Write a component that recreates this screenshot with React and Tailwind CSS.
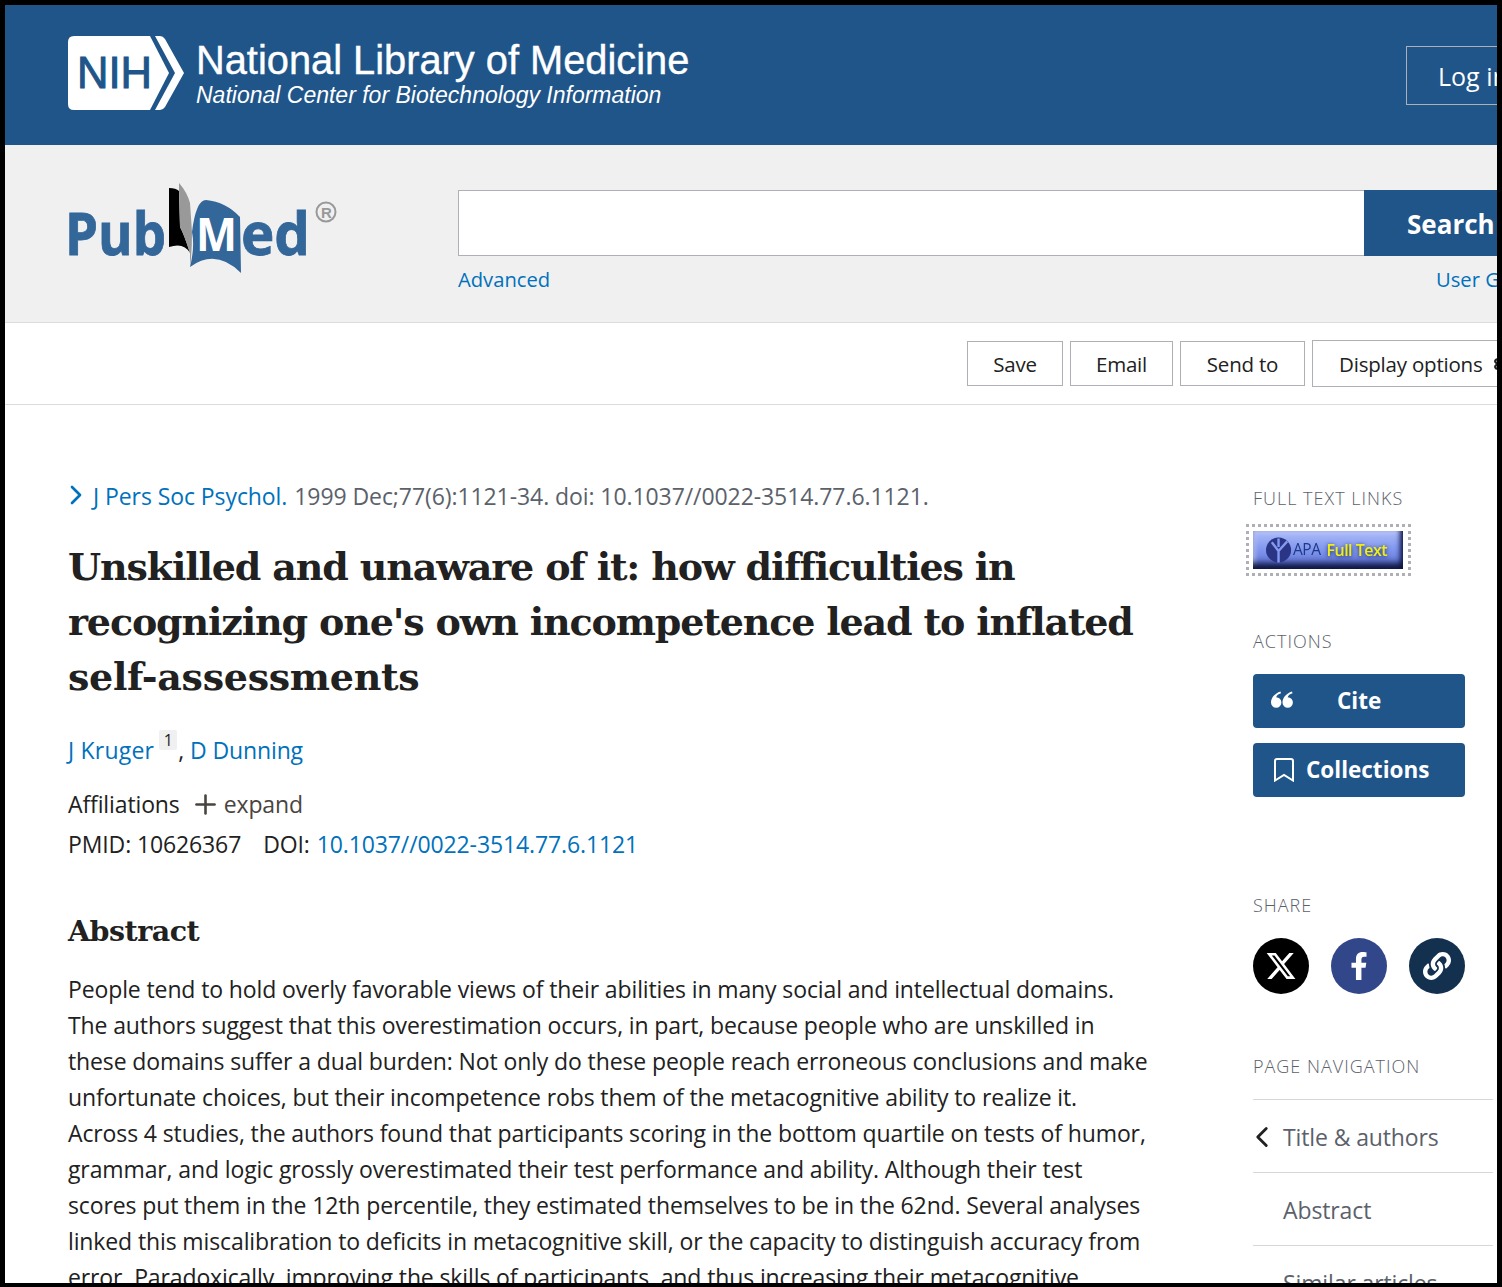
import { ChevronLeft, ChevronRight, Plus, Settings } from 'lucide-react';
import { FaFacebookF, FaLink } from 'react-icons/fa';
import { FaXTwitter } from 'react-icons/fa6';

const sans = 'font-["Open_Sans","Noto_Sans",sans-serif]';
const body = 'text-[23px] tracking-[-0.12px]';

const abstractLines = [
  'People tend to hold overly favorable views of their abilities in many social and intellectual domains.',
  'The authors suggest that this overestimation occurs, in part, because people who are unskilled in',
  'these domains suffer a dual burden: Not only do these people reach erroneous conclusions and make',
  'unfortunate choices, but their incompetence robs them of the metacognitive ability to realize it.',
  'Across 4 studies, the authors found that participants scoring in the bottom quartile on tests of humor,',
  'grammar, and logic grossly overestimated their test performance and ability. Although their test',
  'scores put them in the 12th percentile, they estimated themselves to be in the 62nd. Several analyses',
  'linked this miscalibration to deficits in metacognitive skill, or the capacity to distinguish accuracy from',
  'error. Paradoxically, improving the skills of participants, and thus increasing their metacognitive',
];

const NihLogo = () => (
  <svg width="117" height="74" viewBox="0 0 117 74">
    <path d="M6 0H82L101 37L82 74H6Q0 74 0 68V6Q0 0 6 0Z" fill="#fff" />
    <path d="M87 0H92Q95 0 97 3L116 37L97 71Q95 74 92 74H87L107 37Z" fill="#fff" />
    <text x="9" y="52" fontSize="44" fill="#20558a" stroke="#20558a" strokeWidth="1" fontFamily="Liberation Sans" textLength="75" lengthAdjust="spacingAndGlyphs">NIH</text>
  </svg>
);

const PubMedLogo = () => (
  <svg width="270" height="92" viewBox="0 0 270 92" className="overflow-visible">
    <text x="-3" y="73" fontSize="59" fontWeight="700" fill="#336699" stroke="#336699" strokeWidth="0.8" fontFamily="Open Sans" textLength="101" lengthAdjust="spacingAndGlyphs">Pub</text>
    <path d="M101 6Q108 6 111 9L112 45Q116 52 122 71Q116 60 101 65Z" fill="#000" />
    <path d="M111 1Q119 10 122 21L124 50Q124 70 122 85Q122 75 122 71Q115 50 112 45L111 8Z" fill="#999" />
    <path d="M122 85Q127 65 124 50Q128 18 138 18Q158 20 172 35L173 91Q148 66 122 85Z" fill="#336699" />
    <text x="128" y="69" fontSize="47" fontWeight="700" fill="#fff" fontFamily="Open Sans" textLength="41" lengthAdjust="spacingAndGlyphs">M</text>
    <text x="173" y="73" fontSize="59" fontWeight="700" fill="#336699" stroke="#336699" strokeWidth="0.8" fontFamily="Open Sans" textLength="69" lengthAdjust="spacingAndGlyphs">ed</text>
    <circle cx="258" cy="30" r="9.5" fill="none" stroke="#999" strokeWidth="2" />
    <text x="253" y="36" fontSize="15" fill="#999" fontWeight="700" fontFamily="Liberation Sans">R</text>
  </svg>
);

const ApaBadge = () => (
  <div className="w-[150px] h-[38px] flex items-center pl-[13px] bg-gradient-to-b from-[#aebcf8] via-[#7f95ee] to-[#5a6fd0] shadow-[inset_0_-9px_6px_-3px_#0f1640,inset_-6px_0_5px_-3px_#141c52,inset_4px_3px_4px_-2px_#c2cdfb] overflow-hidden">
    <svg width="27" height="28" viewBox="0 0 28 28" className="blur-[0.5px]">
      <circle cx="13" cy="14" r="13" fill="#2a3585" />
      <path d="M13 27V13M13 15L6 6M13 15L22 5M13 11V2" stroke="#8499f0" strokeWidth="2.5" fill="none" />
    </svg>
    <span className="text-[15.5px] text-[#1f3a85] tracking-[-0.5px] blur-[0.3px]">APA</span>
    <span className="ml-[6px] text-[16px] text-[#f0f010] font-semibold tracking-[-0.5px] [text-shadow:0_1px_4px_#1a2460] whitespace-nowrap blur-[0.3px]">Full Text</span>
  </div>
);

const SideLabel = ({ children, className = '' }) => (
  <h3 className={`text-[18px] leading-[24px] font-light tracking-[1px] text-[#5b616b] ${className}`}>{children}</h3>
);

const ToolButton = ({ children, className = '' }) => (
  <button className={`h-[45px] pt-[1px] border border-[#aeb0b5] text-[20.5px] tracking-[-0.2px] text-[#212121] bg-white shrink-0 ${className}`}>{children}</button>
);

const ShareButton = ({ className, children }) => (
  <div className={`w-[56px] h-[56px] rounded-full flex items-center justify-center text-white ${className}`}>{children}</div>
);

const NavRow = ({ children, active }) => (
  <div className={`h-[73px] border-t border-[#d6d7d9] flex items-center relative pl-[30px] pt-[2px] ${body} text-[#5b616b] whitespace-nowrap`}>
    {active && <ChevronLeft className="absolute left-[-8px] w-[34px] h-[34px] text-[#212121]" strokeWidth={2} />}
    {children}
  </div>
);

export default function App() {
  return (
    <div className={`w-[1502px] h-[1287px] bg-black pt-[5px] pl-[5px] pr-[5px] pb-[4px] ${sans}`}>
      <div className="w-full h-full bg-white overflow-hidden">
        {/* NIH banner */}
        <div className="h-[140px] bg-[#20558a] flex items-start w-[1700px] pl-[63px]">
          <div className="mt-[31px]"><NihLogo /></div>
          <div className="ml-[11px] mt-[33px] text-white font-['Liberation_Sans',sans-serif] w-[1210px] shrink-0">
            <div className="text-[39.8px] leading-[44px] [-webkit-text-stroke:0.4px_white]">National Library of Medicine</div>
            <div className="text-[23px] leading-[26px] italic">National Center for Biotechnology Information</div>
          </div>
          <div className="mt-[41px] h-[59px] w-[150px] border border-[#aeb0b5] pl-[31px] pt-[2px] flex items-center text-[25px] text-white shrink-0">Log in</div>
        </div>

        {/* Search */}
        <div className="h-[178px] bg-[#f0f0f0] border-b border-[#dcdcdc] flex items-start w-[1600px] pl-[63px]">
          <div className="mt-[37px] w-[390px] shrink-0"><PubMedLogo /></div>
          <div className="mt-[45px]">
            <div className="flex">
              <div className="w-[906px] h-[66px] bg-white border border-[#aeb0b5] border-r-0" />
              <button className="w-[170px] h-[66px] bg-[#20558a] text-white text-[26px] font-bold text-left pl-[43px] pt-[3px]">Search</button>
            </div>
            <div className="flex mt-[9px] text-[20.2px] leading-[28px] text-[#0071bc]">
              <span className="w-[978px]">Advanced</span>
              <span className="whitespace-nowrap">User Guide</span>
            </div>
          </div>
        </div>

        {/* Toolbar */}
        <div className="h-[82px] border-b border-[#dcdcdc] flex items-center gap-[7px] pl-[962px] w-[1700px]">
          <ToolButton className="w-[96px]">Save</ToolButton>
          <ToolButton className="w-[103px]">Email</ToolButton>
          <ToolButton className="w-[125px]">Send to</ToolButton>
          <ToolButton className="w-[250px] h-[47px] text-left pl-[26px] flex items-center">
            Display options
            <Settings className="ml-[10px] w-[18px] h-[18px] text-[#212121]" strokeWidth={3} />
          </ToolButton>
        </div>

        {/* Article + sidebar */}
        <div className="flex pl-[63px]">
          <main className="w-[1185px] shrink-0">
            <div className="flex items-center mt-[73px] h-[36px] text-[23px] tracking-[-0.08px] text-[#5b616b] whitespace-nowrap">
              <ChevronRight className="ml-[-8px] w-[32px] h-[32px] text-[#0071bc] mr-[1px] mt-[-2px]" strokeWidth={2} />
              <span className="text-[#0071bc]">J Pers Soc Psychol.</span>
              <span className="ml-[7px]">1999 Dec;77(6):1121-34. doi: 10.1037//0022-3514.77.6.1121.</span>
            </div>
            <h1 className="mt-[25px] text-[38px] leading-[55px] font-bold text-[#212121] font-['DejaVu_Serif',serif] tracking-[-1.15px] whitespace-nowrap">
              Unskilled and unaware of it: how difficulties in<br />
              recognizing one's own incompetence lead to inflated<br />
              <span className="tracking-[-0.3px]">self-assessments</span>
            </h1>
            <div className={`mt-[28px] flex items-start h-[36px] ${body} leading-[36px] text-[#0071bc]`}>
              <span className="tracking-[0.2px]">J Kruger</span>
              <span className="ml-[5px] mt-[-2px] w-[18px] h-[20px] leading-[20px] bg-[#f0f0f0] text-[16px] text-center text-[#212121] rounded-[2px]">1</span>
              <span className="text-[#212121] ml-[1px]">,</span>
              <span className="ml-[6px]">D Dunning</span>
            </div>
            <div className={`mt-[18px] flex items-center h-[36px] ${body} text-[#212121]`}>
              Affiliations
              <Plus className="ml-[10px] w-[31px] h-[31px] text-[#494440]" strokeWidth={2} />
              <span className="ml-[3px] text-[#494440]">expand</span>
            </div>
            <div className={`mt-[4px] flex items-center h-[36px] ${body} text-[#212121]`}>
              PMID: 10626367
              <span className="ml-[22px]">DOI:</span>
              <span className="ml-[7px] text-[#0071bc]">10.1037//0022-3514.77.6.1121</span>
            </div>
            <h2 className="mt-[47px] text-[28.5px] leading-[44px] font-bold text-[#212121] font-['DejaVu_Serif',serif] tracking-[-0.5px]">Abstract</h2>
            <div className={`mt-[18px] ${body} leading-[36px] text-[#212121] whitespace-nowrap`}>
              {abstractLines.map((line) => <div key={line}>{line}</div>)}
            </div>
          </main>

          {/* Sidebar */}
          <aside className="w-[240px] shrink-0 pt-[81px]">
            <SideLabel>FULL TEXT LINKS</SideLabel>
            <div className="mt-[14px] ml-[-7px] w-[165px] h-[52px] border-[3px] border-dotted border-[#aeb0b5] p-[4px]">
              <ApaBadge />
            </div>
            <SideLabel className="mt-[53px]">ACTIONS</SideLabel>
            <div className="mt-[21px] w-[212px] h-[54px] rounded-[4px] bg-[#20558a] flex items-center pl-[18px] text-white text-[22.5px] font-bold">
              <svg width="22" height="18" viewBox="0 0 22 18" className="mb-[3px]" fill="#fff">
                <path d="M9.500 0.500C3.500 2.500 0 7 0 11.500A5.200 5.200 0 1 0 5.200 6.300C5.600 4.500 7.500 3 10 2.300Z" />
                <path d="M21 0.500C15 2.500 11.500 7 11.500 11.500A5.200 5.200 0 1 0 16.700 6.300C17.100 4.500 19 3 21.500 2.300Z" />
              </svg>
              <span className="ml-[44px]">Cite</span>
            </div>
            <div className="mt-[15px] w-[212px] h-[54px] rounded-[4px] bg-[#20558a] flex items-center pl-[21px] text-white text-[22.5px] font-bold">
              <svg width="20" height="24" viewBox="0 0 20 24" fill="none" stroke="#fff" strokeWidth="2">
                <path d="M3 1H17Q19 1 19 3V22.500L10 17L1 22.500V3Q1 1 3 1Z" />
              </svg>
              <span className="ml-[12px]">Collections</span>
            </div>
            <SideLabel className="mt-[96px]">SHARE</SideLabel>
            <div className="mt-[21px] w-[212px] flex justify-between">
              <ShareButton className="bg-black"><FaXTwitter className="w-[32px] h-[32px]" /></ShareButton>
              <ShareButton className="bg-[#31478a]"><FaFacebookF className="w-[24px] h-[28px]" /></ShareButton>
              <ShareButton className="bg-[#13304f]"><FaLink className="w-[28px] h-[28px]" /></ShareButton>
            </div>
            <SideLabel className="mt-[60px]">PAGE NAVIGATION</SideLabel>
            <div className="mt-[21px]">
              <NavRow active>Title &amp; authors</NavRow>
              <NavRow>Abstract</NavRow>
              <NavRow>Similar articles</NavRow>
            </div>
          </aside>
        </div>
      </div>
    </div>
  );
}
